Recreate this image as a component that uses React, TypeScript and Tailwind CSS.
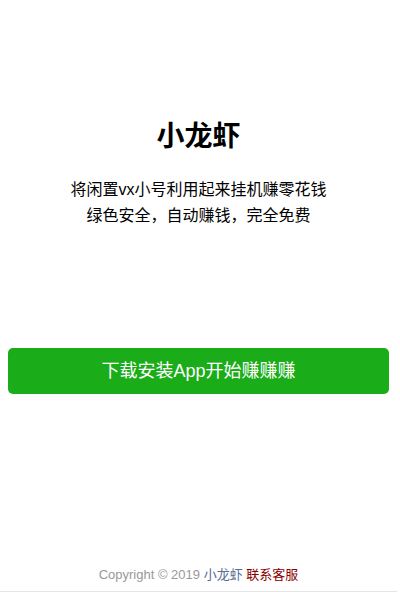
export default function App() {
  return (
    <div
      className="flex min-h-[592px] w-[397px] flex-col bg-white text-black"
      style={{ fontFamily: '"Liberation Sans", "Noto Sans CJK SC", sans-serif' }}
    >
      <div className="pt-[117px] text-center">
        <h1 className="text-[28px] font-bold leading-[40px]">小龙虾</h1>
        <p className="mt-[20px] text-[16px] leading-[26px]">
          将闲置vx小号利用起来挂机赚零花钱
          <br />
          绿色安全，自动赚钱，完全免费
        </p>
      </div>

      <div className="mt-[119px] px-2">
        <a
          href="#"
          className="flex h-[46px] w-full items-center justify-center rounded-[5px] bg-[#1aad19] text-[18px] text-white"
        >
          下载安装App开始赚赚赚
        </a>
      </div>

      <div className="mt-auto pb-[6px] text-center text-[13px] leading-[20px] text-[#999]">
        Copyright © 2019 <span className="text-[#586c94]">小龙虾</span>{' '}
        <a href="#" className="text-[#8b0000]">联系客服</a>
      </div>
      <div className="h-px bg-[#e5e5e5]" />
    </div>
  );
}
